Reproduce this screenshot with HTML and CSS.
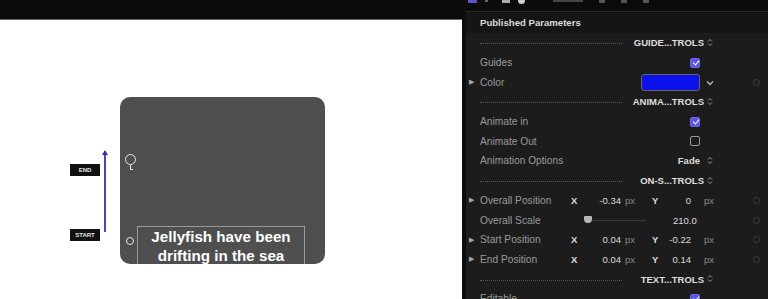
FILE: index.html
```html
<!DOCTYPE html>
<html>
<head>
<meta charset="utf-8">
<link rel="stylesheet" href="styles.css">
</head>
<body>
<div class="app">
  <div class="viewer">
    <div class="topbar"></div>
    <div class="canvas">
      <div class="tag tag-end">END</div>
      <div class="tag tag-start">START</div>
      <div class="path-line"></div>
      <div class="path-head"></div>
      <div class="card">
        <div class="handle handle-end"></div>
        <div class="handle-tail"></div>
        <div class="handle handle-start"></div>
        <div class="textbox">Jellyfish have been<br>drifting in the sea</div>
      </div>
    </div>
  </div>
  <div class="panel">
    <div class="toolbar">
      <span class="tb tb-blue"></span>
      <span class="tb tb-dot"></span>
      <span class="tb tb-sq"></span>
      <span class="tb tb-circ"></span>
      <span class="tb tb-g1"></span>
      <span class="tb tb-g2"></span>
      <span class="tb tb-g2"></span>
      <span class="tb tb-g2"></span>
    </div>
    <div class="ph">Published Parameters</div>
    <div class="rows">
      <div class="row sect"><span class="dash"></span><span class="stitle">GUIDE...TROLS</span><svg class="upd" viewBox="0 0 6 9"><path d="M1 3.5 3 1.5 5 3.5M1 5.5 3 7.5 5 5.5"/></svg></div>
      <div class="row"><span class="tri"></span><span class="lbl">Guides</span><span class="cb on"></span></div>
      <div class="row"><span class="tri">▶</span><span class="lbl">Color</span><span class="swatch"></span><svg class="chev" viewBox="0 0 8 6"><path d="M1 1.5 4 4.5 7 1.5"/></svg><span class="kf"></span></div>
      <div class="row sect"><span class="dash"></span><span class="stitle">ANIMA...TROLS</span><svg class="upd" viewBox="0 0 6 9"><path d="M1 3.5 3 1.5 5 3.5M1 5.5 3 7.5 5 5.5"/></svg></div>
      <div class="row"><span class="tri"></span><span class="lbl">Animate in</span><span class="cb on"></span></div>
      <div class="row"><span class="tri"></span><span class="lbl">Animate Out</span><span class="cb"></span></div>
      <div class="row"><span class="tri"></span><span class="lbl">Animation Options</span><span class="pop">Fade</span><svg class="upd" viewBox="0 0 6 9"><path d="M1 3.5 3 1.5 5 3.5M1 5.5 3 7.5 5 5.5"/></svg></div>
      <div class="row sect"><span class="dash"></span><span class="stitle">ON-S...TROLS</span><svg class="upd" viewBox="0 0 6 9"><path d="M1 3.5 3 1.5 5 3.5M1 5.5 3 7.5 5 5.5"/></svg></div>
      <div class="row"><span class="tri">▶</span><span class="lbl">Overall Position</span><span class="ax">X</span><span class="val">-0.34</span><span class="unit">px</span><span class="ax">Y</span><span class="val v2">0</span><span class="unit u2">px</span><span class="kf"></span></div>
      <div class="row"><span class="tri"></span><span class="lbl">Overall Scale</span><span class="slider"><span class="knob"></span><span class="track"></span></span><span class="scale">210.0</span><span class="kf"></span></div>
      <div class="row"><span class="tri">▶</span><span class="lbl">Start Position</span><span class="ax">X</span><span class="val">0.04</span><span class="unit">px</span><span class="ax">Y</span><span class="val v2">-0.22</span><span class="unit u2">px</span><span class="kf"></span></div>
      <div class="row"><span class="tri">▶</span><span class="lbl">End Position</span><span class="ax">X</span><span class="val">0.04</span><span class="unit">px</span><span class="ax">Y</span><span class="val v2">0.14</span><span class="unit u2">px</span><span class="kf"></span></div>
      <div class="row sect"><span class="dash"></span><span class="stitle">TEXT...TROLS</span><svg class="upd" viewBox="0 0 6 9"><path d="M1 3.5 3 1.5 5 3.5M1 5.5 3 7.5 5 5.5"/></svg></div>
      <div class="row"><span class="tri"></span><span class="lbl">Editable</span><span class="cb on"></span></div>
    </div>
  </div>
</div>
</body>
</html>
```
FILE: styles.css
```css
* { box-sizing: border-box; }
html, body { margin: 0; padding: 0; }
body {
  width: 768px;
  height: 299px;
  overflow: hidden;
  font-family: "Liberation Sans", Arial, sans-serif;
  background: #0b0b0b;
}
.app { display: flex; width: 768px; height: 299px; }
.viewer { width: 462px; display: flex; flex-direction: column; }
.topbar { height: 20px; flex-shrink: 0; background: #0b0b0b; border-bottom: 1px solid #6a6a6a; }
.canvas { position: relative; flex: 1; background: #ffffff; }

.tag {
  position: absolute;
  left: 70px;
  width: 30px;
  height: 12px;
  background: #111;
  color: #e8e8e8;
  font-size: 6px;
  font-weight: bold;
  line-height: 12px;
  text-align: center;
}
.tag-end { top: 144px; }
.tag-start { top: 209px; }
.path-line {
  position: absolute;
  left: 104px;
  top: 133px;
  width: 1.5px;
  height: 79px;
  background: #4a46b8;
}
.path-head {
  position: absolute;
  left: 102px;
  top: 130px;
  width: 0; height: 0;
  border-left: 3px solid transparent;
  border-right: 3px solid transparent;
  border-bottom: 5px solid #3030a8;
}
.card {
  position: absolute;
  left: 120px;
  top: 77px;
  width: 205px;
  height: 167px;
  background: #4f4f4f;
  border-radius: 10px;
  overflow: hidden;
}
.handle {
  position: absolute;
  border: 1.5px solid #e6e6e6;
  border-radius: 50%;
}
.handle-end { left: 5px; top: 57px; width: 11px; height: 11px; }
.handle-tail {
  position: absolute;
  left: 10px; top: 68px;
  width: 3px; height: 5px;
  border-left: 1.5px solid #e6e6e6;
  border-bottom: 1.5px solid #e6e6e6;
}
.handle-start { left: 6px; top: 140px; width: 8px; height: 8px; }
.textbox {
  position: absolute;
  left: 17px;
  top: 129px;
  width: 168px;
  height: 44px;
  border: 1px solid #9a9a9a;
  color: #ffffff;
  font-size: 15.2px;
  font-weight: bold;
  line-height: 19px;
  text-align: center;
  padding-top: 0;
}

.panel {
  width: 306px;
  background: #1c1c1c;
  border-left: 4px solid #0d0d0d;
  display: flex;
  flex-direction: column;
  overflow: hidden;
}
.toolbar {
  height: 12px;
  flex-shrink: 0;
  background: #0b0b0b;
  border-bottom: 1px solid #2a2a2a;
  display: flex;
  align-items: flex-start;
  gap: 8px;
  padding-left: 2px;
  overflow: hidden;
}
.tb { display: block; flex-shrink: 0; }
.tb-blue { width: 9px; height: 3px; background: #5a55d0; }
.tb-dot { width: 3px; height: 2px; background: #666; }
.tb-sq { width: 8px; height: 3px; background: #aaa; margin-left: 6px; }
.tb-circ { width: 7px; height: 4px; background: #ccc; border-radius: 0 0 4px 4px; }
.tb-g1 { width: 30px; height: 2px; background: #444; margin-left: 20px; }
.tb-g2 { width: 6px; height: 3px; background: #555; margin-left: 8px; }
.ph {
  height: 21px;
  flex-shrink: 0;
  background: #151515;
  color: #dcdcdc;
  font-size: 9.6px;
  font-weight: bold;
  line-height: 21px;
  padding-left: 14px;
}
.rows { display: flex; flex-direction: column; flex-shrink: 0; }
.row {
  height: 19.7px;
  flex-shrink: 0;
  display: flex;
  align-items: center;
  font-size: 9.5px;
  color: #9a9a9a;
  position: relative;
}
.tri { width: 14px; font-size: 7px; color: #a8a8a8; padding-left: 3px; }
.lbl { width: 91px; font-size: 10.2px; }
.cb {
  position: absolute;
  left: 224px;
  width: 10px; height: 10px;
  border: 1px solid #9a9a9a;
  border-radius: 2px;
}
.cb.on {
  background: #5b55e0;
  border-color: #6a66ee;
}
.cb.on::after {
  content: "";
  position: absolute;
  left: 2.5px; top: 0.5px;
  width: 3px; height: 5px;
  border-right: 1.3px solid #fff;
  border-bottom: 1.3px solid #fff;
  transform: rotate(40deg);
}
.swatch {
  position: absolute;
  left: 175px;
  width: 59px; height: 17px;
  background: #0c10ea;
  border: 1.5px solid #666;
  border-radius: 3px;
}
.chev {
  position: absolute;
  left: 240px;
  top: 8px;
  width: 8px; height: 6px;
  fill: none;
  stroke: #bbb;
  stroke-width: 1.4;
}
.pop { position: absolute; right: 68px; color: #dcdcdc; font-weight: bold; font-size: 9.5px; }
.kf {
  position: absolute;
  left: 287px;
  width: 7px; height: 7px;
  border: 1.2px solid #3e3e3e;
  border-radius: 50%;
}
.dash {
  margin-left: 14px;
  width: 142px;
  border-top: 1px dotted #5a5a5a;
  margin-top: 2px;
}
.stitle {
  position: absolute;
  right: 64px;
  color: #dedede;
  font-weight: bold;
  font-size: 9.5px;
}
.upd {
  position: absolute;
  left: 241px;
  top: 5px;
  width: 6px;
  height: 9px;
  fill: none;
  stroke: #9a9a9a;
  stroke-width: 1;
}
.ax { width: 10px; color: #dcdcdc; font-weight: bold; }
.val { width: 40px; text-align: right; color: #dcdcdc; }
.val.v2 { width: 29px; }
.unit { width: 31px; padding-left: 4px; color: #8a8a8a; }
.unit.u2 { padding-left: 13px; }
.slider { position: relative; width: 68px; height: 10px; margin-left: 7px; display: flex; align-items: center; }
.knob {
  position: absolute;
  left: 6px; top: 1px;
  width: 8px; height: 7px;
  background: #b8b8b8;
  border-radius: 1px 1px 4px 4px;
}
.track { margin-left: 12px; width: 58px; height: 1px; background: #3a3a3a; }
.scale { color: #dcdcdc; margin-left: 27px; font-size: 9.5px; }
```
